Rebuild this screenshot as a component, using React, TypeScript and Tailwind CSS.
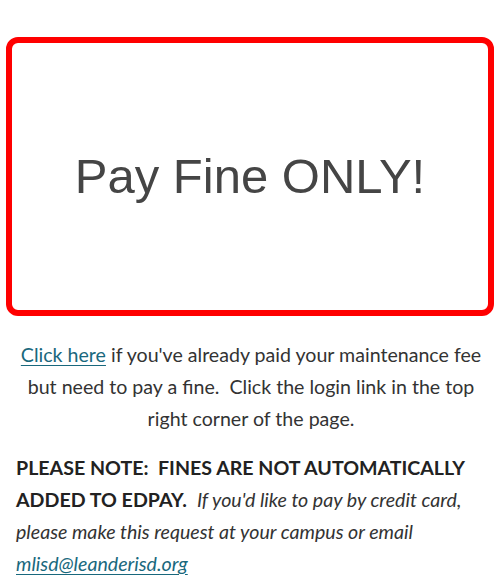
export default function App() {
  return (
    <div className="w-[502px] h-[580px] bg-white overflow-hidden pt-[37px]">
      <div className="ml-[6px] w-[488px] h-[279px] border-[6px] border-[#ff0000] rounded-[12px] flex items-center justify-center">
        <span
          className="text-[49px] leading-none text-[#454545] tracking-[0px]"
          style={{ fontFamily: '"Liberation Sans", Arial, sans-serif' }}
        >
          Pay Fine ONLY!
        </span>
      </div>
      <div
        className="px-[16px] pt-[23px] text-[19.6px] leading-[32px] text-[#333333]"
        style={{ fontFamily: 'Lato, "Open Sans", sans-serif' }}
      >
        <p className="text-center">
          <a href="#" className="text-[#19687d] underline underline-offset-[3px]">
            Click here
          </a>{" "}
          if you've already paid your maintenance fee but need to pay a fine.{"\u00a0 "}Click the login link in the top right corner of the page.
        </p>
        <p className="mt-[17px] text-left">
          <strong className="font-bold text-[#222222]">
            PLEASE NOTE:{"\u00a0 "}FINES ARE NOT AUTOMATICALLY ADDED TO EDPAY.
          </strong>
          {"\u00a0 "}
          <em className="italic">
            If you'd like to pay by credit card, please make this request at your campus or email{" "}
            <a href="#" className="text-[#19687d] underline underline-offset-[3px]">
              mlisd@leanderisd.org
            </a>
          </em>
        </p>
      </div>
    </div>
  );
}
